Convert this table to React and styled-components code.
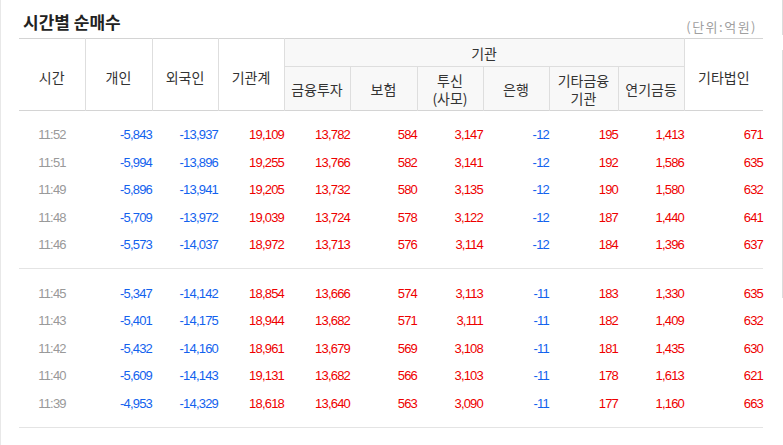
import React from 'react';
import styled, { createGlobalStyle } from 'styled-components';

const GlobalStyle = createGlobalStyle`
  html, body {
    margin: 0;
    padding: 0;
    background: #fff;
  }
`;

const Page = styled.div`
  display: flex;
  width: 783px;
  height: 445px;
  overflow: hidden;
`;

const Panel = styled.div`
  width: 781px;
  border-left: 1px solid #e8e8e8;
  padding: 0 19px 0 18px;
  box-sizing: border-box;
  font-family: "Noto Sans CJK KR", "Noto Sans", sans-serif;
`;

const EdgeStrip = styled.div`
  display: flex;
  flex-direction: column;
  width: 1px;
  margin-left: 1px;
`;

const EdgeLine = styled.div`
  width: 1px;
  height: ${p => p.$h}px;
  margin-top: ${p => p.$top || 0}px;
  background: #dcdcdc;
`;

const TitleBar = styled.div`
  display: flex;
  justify-content: space-between;
  align-items: flex-start;
  height: 38px;
`;

const Title = styled.h3`
  margin: 11px 0 0 4px;
  font-size: 17px;
  line-height: 22px;
  font-weight: 700;
  color: #222;
`;

const Unit = styled.span`
  margin: 18px 5px 0 0;
  font-size: 13px;
  line-height: 17px;
  letter-spacing: 1.5px;
  color: #a0a0a0;
`;

const Table = styled.table`
  width: 744px;
  border-collapse: collapse;
  table-layout: fixed;
`;

const Head = styled.thead`
  border-top: 1px solid #d4d4d4;
  border-bottom: 1px solid #d4d4d4;
`;

const Th = styled.th`
  padding: 0;
  font-size: 14px;
  line-height: 18px;
  font-weight: 400;
  color: #333;
  text-align: center;
  vertical-align: middle;
  background: ${p => (p.$sub ? '#f8f8f8' : '#fff')};
  border-left: ${p => (p.$first ? 'none' : '1px solid #dedede')};
  border-bottom: ${p => (p.$group ? '1px solid #dedede' : 'none')};
  padding-top: ${p => (p.$tall ? '5px' : '0')};
`;

const Line = styled.span`
  display: block;
  height: 18px;
  line-height: 18px;
  overflow: visible;
`;

const HeadRow = styled.tr`
  height: ${p => p.$h}px;
`;

const Group = styled.tbody`
  border-bottom: 1px solid #e4e4e4;
`;

const SpacerCell = styled.td`
  height: ${p => p.$h}px;
  padding: 0;
`;

const Row = styled.tr`
  height: 27.5px;
`;

const Cell = styled.td`
  padding: 0;
  font-family: "Liberation Sans", Arial, sans-serif;
  font-size: 13px;
  letter-spacing: -0.8px;
  text-align: ${p => (p.$time ? 'center' : 'right')};
  color: ${p => (p.$time ? '#999' : p.$neg ? '#1262ee' : '#ee0000')};
`;

const widths = [66, 67, 66, 66, 66, 67, 66, 66, 69, 66, 79];

const groups = [
  [
    ['11:52', '-5,843', '-13,937', '19,109', '13,782', '584', '3,147', '-12', '195', '1,413', '671'],
    ['11:51', '-5,994', '-13,896', '19,255', '13,766', '582', '3,141', '-12', '192', '1,586', '635'],
    ['11:49', '-5,896', '-13,941', '19,205', '13,732', '580', '3,135', '-12', '190', '1,580', '632'],
    ['11:48', '-5,709', '-13,972', '19,039', '13,724', '578', '3,122', '-12', '187', '1,440', '641'],
    ['11:46', '-5,573', '-14,037', '18,972', '13,713', '576', '3,114', '-12', '184', '1,396', '637'],
  ],
  [
    ['11:45', '-5,347', '-14,142', '18,854', '13,666', '574', '3,113', '-11', '183', '1,330', '635'],
    ['11:43', '-5,401', '-14,175', '18,944', '13,682', '571', '3,111', '-11', '182', '1,409', '632'],
    ['11:42', '-5,432', '-14,160', '18,961', '13,679', '569', '3,108', '-11', '181', '1,435', '630'],
    ['11:40', '-5,609', '-14,143', '19,131', '13,682', '566', '3,103', '-11', '178', '1,613', '621'],
    ['11:39', '-4,953', '-14,329', '18,618', '13,640', '563', '3,090', '-11', '177', '1,160', '663'],
  ],
];

const pads = [[10, 9], [11, 10]];

export default function App() {
  return (
    <Page>
      <GlobalStyle />
      <Panel>
        <TitleBar>
          <Title>시간별 순매수</Title>
          <Unit>(단위:억원)</Unit>
        </TitleBar>
        <Table>
          <colgroup>
            {widths.map((w, i) => <col key={i} style={{ width: `${w}px` }} />)}
          </colgroup>
          <Head>
            <HeadRow $h={28}>
              <Th rowSpan={2} $first $tall>시간</Th>
              <Th rowSpan={2} $tall>개인</Th>
              <Th rowSpan={2} $tall>외국인</Th>
              <Th rowSpan={2} $tall>기관계</Th>
              <Th colSpan={6} $sub $group>기관</Th>
              <Th rowSpan={2} $tall>기타법인</Th>
            </HeadRow>
            <HeadRow $h={44}>
              <Th $sub>금융투자</Th>
              <Th $sub>보험</Th>
              <Th $sub><Line>투신</Line><Line>(사모)</Line></Th>
              <Th $sub>은행</Th>
              <Th $sub><Line>기타금융</Line><Line>기관</Line></Th>
              <Th $sub>연기금등</Th>
            </HeadRow>
          </Head>
          {groups.map((rows, g) => (
            <Group key={g}>
              <tr><SpacerCell colSpan={11} $h={pads[g][0]} /></tr>
              {rows.map(row => (
                <Row key={row[0]}>
                  {row.map((v, i) => (
                    <Cell key={i} $time={i === 0} $neg={v.startsWith('-')}>{v}</Cell>
                  ))}
                </Row>
              ))}
              <tr><SpacerCell colSpan={11} $h={pads[g][1]} /></tr>
            </Group>
          ))}
        </Table>
      </Panel>
      <EdgeStrip>
        <EdgeLine $h={35} />
        <EdgeLine $h={248} $top={15} />
      </EdgeStrip>
    </Page>
  );
}
